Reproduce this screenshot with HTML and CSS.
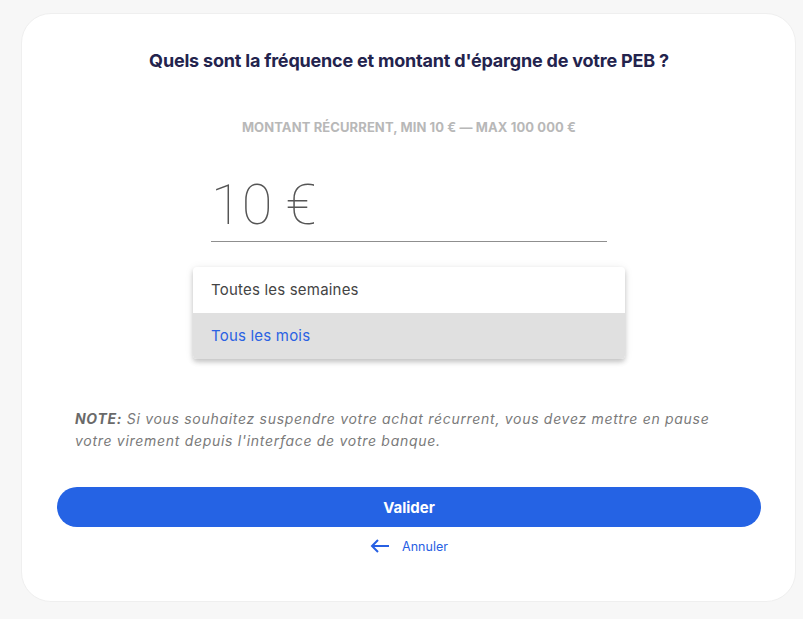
FILE: index.html
```html
<!DOCTYPE html>
<html lang="fr">
<head>
    <meta charset="UTF-8">
    <title>Épargne PEB</title>
    <link rel="stylesheet" href="styles.css">
</head>
<body>
<div class="card">
    <h1 class="title">Quels sont la fréquence et montant d'épargne de votre PEB ?</h1>
    <p class="label">Montant récurrent, min 10 € — max 100 000 €</p>
    <div class="amount">
        <span class="amount-value">10 €</span>
    </div>
    <ul class="menu">
        <li>Toutes les semaines</li>
        <li class="active">Tous les mois</li>
    </ul>
    <p class="note"><b>NOTE:</b> Si vous souhaitez suspendre votre achat récurrent, vous devez mettre en pause votre virement depuis l'interface de votre banque.</p>
    <button class="submit">Valider</button>
    <a class="cancel" href="#">
        <svg width="20" height="14" viewBox="0 0 20 14">
            <path d="M19 7H2M8 1L2 7l6 6" fill="none" stroke="#2760e3" stroke-width="2"/>
        </svg>
        <span>Annuler</span>
    </a>
</div>
</body>
</html>
```

FILE: styles.css
```css
*{
    margin: 0;
    padding: 0;
    box-sizing: border-box;
}
body{
    background: #f7f7f7;
    font-family: Inter, "Noto Sans", sans-serif;
}
li{
    list-style: none;
}
.card{
    width: 775px;
    height: 589px;
    margin: 13px 0 0 21px;
    padding: 35px 35px 0 36px;
    background: #fff;
    border: 1px solid #efefef;
    border-radius: 30px;
    display: flex;
    flex-direction: column;
    align-items: center;
}
.title{
    font-size: 18px;
    line-height: 24px;
    font-weight: 700;
    color: #23234d;
    letter-spacing: -0.2px;
}
.label{
    margin-top: 46px;
    font-size: 13px;
    line-height: 16px;
    font-weight: 700;
    color: #b8b8b8;
    text-transform: uppercase;
    letter-spacing: 0.1px;
}
.amount{
    margin-top: 42px;
    width: 396px;
    padding-bottom: 8px;
    border-bottom: 1px solid #8f8f8f;
}
.amount-value{
    display: block;
    font-family: Roboto, sans-serif;
    font-weight: 100;
    font-size: 56px;
    line-height: 56px;
    color: #555;
}
.menu{
    margin-top: 25px;
    width: 432px;
    border-radius: 4px;
    overflow: hidden;
    box-shadow: 0 3px 5px rgba(0,0,0,0.2), 0 1px 10px rgba(0,0,0,0.08);
}
.menu li{
    height: 46px;
    line-height: 46px;
    padding: 0 18px;
    font-size: 15px;
    color: #444;
    letter-spacing: 0.2px;
}
.menu li.active{
    background: #e0e0e0;
    color: #2a62e3;
}
.note{
    margin-top: 49px;
    width: 668px;
    font-size: 14px;
    line-height: 22px;
    font-style: italic;
    color: #7a7a7a;
    letter-spacing: 0.7px;
}
.note b{
    color: #6a6a6a;
}
.submit{
    margin-top: 35px;
    width: 704px;
    height: 40px;
    border: none;
    border-radius: 20px;
    background: #2563e4;
    color: #fff;
    font-family: Inter, sans-serif;
    font-size: 15px;
    font-weight: 700;
}
.cancel{
    margin-top: 11px;
    display: flex;
    align-items: center;
    gap: 12px;
    height: 16px;
    text-decoration: none;
    color: #2760e3;
    font-size: 12.5px;
}
```
